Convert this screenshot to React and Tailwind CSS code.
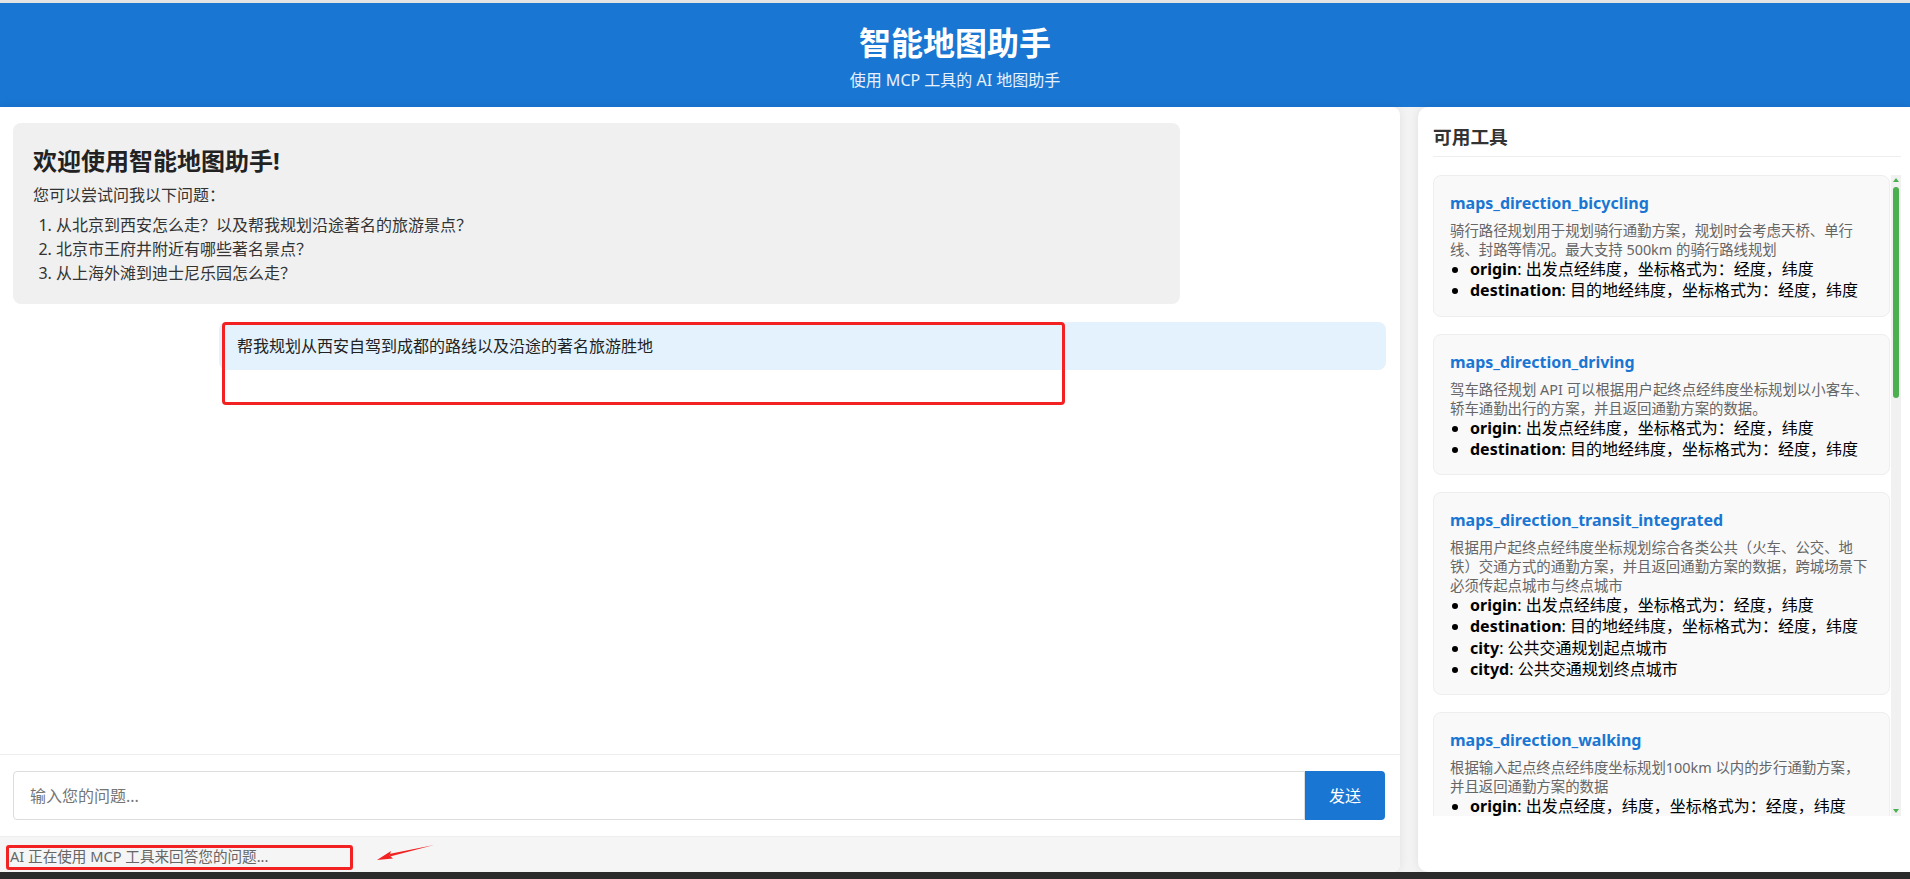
import React from 'react';

const tools = [
  {
    name: 'maps_direction_bicycling',
    desc: '骑行路径规划用于规划骑行通勤方案，规划时会考虑天桥、单行线、封路等情况。最大支持 500km 的骑行路线规划',
    params: [
      ['origin', '出发点经纬度，坐标格式为：经度，纬度'],
      ['destination', '目的地经纬度，坐标格式为：经度，纬度'],
    ],
  },
  {
    name: 'maps_direction_driving',
    desc: '驾车路径规划 API 可以根据用户起终点经纬度坐标规划以小客车、轿车通勤出行的方案，并且返回通勤方案的数据。',
    params: [
      ['origin', '出发点经纬度，坐标格式为：经度，纬度'],
      ['destination', '目的地经纬度，坐标格式为：经度，纬度'],
    ],
  },
  {
    name: 'maps_direction_transit_integrated',
    desc: '根据用户起终点经纬度坐标规划综合各类公共（火车、公交、地铁）交通方式的通勤方案，并且返回通勤方案的数据，跨城场景下必须传起点城市与终点城市',
    params: [
      ['origin', '出发点经纬度，坐标格式为：经度，纬度'],
      ['destination', '目的地经纬度，坐标格式为：经度，纬度'],
      ['city', '公共交通规划起点城市'],
      ['cityd', '公共交通规划终点城市'],
    ],
  },
  {
    name: 'maps_direction_walking',
    desc: '根据输入起点终点经纬度坐标规划100km 以内的步行通勤方案，并且返回通勤方案的数据',
    params: [
      ['origin', '出发点经度，纬度，坐标格式为：经度，纬度'],
      ['destination', '目的地经度，纬度，坐标格式为：经度，纬度'],
    ],
  },
];

function ToolCard({ tool }) {
  return (
    <div className="shrink-0 bg-[#f9f9f9] border border-[#eee] rounded-[8px] pl-[16px] pr-[18px] pt-[15px] pb-[14px]">
      <h4 className="text-[16px] leading-[24px] font-bold text-[#1976d2] mb-[6px]">{tool.name}</h4>
      <p className="text-[14.4px] leading-[19px] text-[#666]">{tool.desc}</p>
      <ul className="list-disc pl-[20px] text-[16px] leading-[21.3px] text-black">
        {tool.params.map(([k, v]) => (
          <li key={k}>
            <strong>{k}</strong>: {v}
          </li>
        ))}
      </ul>
    </div>
  );
}

export default function App() {
  return (
    <div className="w-[1910px] h-[879px] overflow-hidden flex flex-col bg-[#f3f3f3] font-['Noto_Sans','Noto_Sans_CJK_SC',sans-serif]">
      <div className="h-[3px] shrink-0 bg-[#e4e4e4]" />

      {/* Header */}
      <header className="h-[104px] shrink-0 bg-[#1976d2] text-center pt-[21px]">
        <h1 className="text-[32px] leading-[38px] font-bold text-white">智能地图助手</h1>
        <p className="mt-[7px] text-[16px] leading-[22px] text-white/90">使用 MCP 工具的 AI 地图助手</p>
      </header>

      <main className="h-[765px] shrink-0 flex gap-[18px]">
        {/* Chat */}
        <section className="flex-1 flex flex-col bg-white rounded-r-[8px] overflow-hidden shadow-[0_0_10px_rgba(0,0,0,0.08)]">
          <div className="flex-1 pt-[16px] pl-[13px] pr-[14px]">
            <div className="w-[85%] bg-[#f0f0f0] rounded-[8px] pl-[20px] pr-[20px] pt-[20px] pb-[19px] text-[#222]">
              <h2 className="text-[24px] leading-[36px] font-bold">欢迎使用智能地图助手!</h2>
              <p className="mt-[4px] text-[16px] leading-[24px] text-[#333]">您可以尝试问我以下问题：</p>
              <ol className="mt-[6px] list-decimal pl-[23px] text-[16px] leading-[24px] text-[#333]">
                <li>从北京到西安怎么走？以及帮我规划沿途著名的旅游景点？</li>
                <li>北京市王府井附近有哪些著名景点？</li>
                <li>从上海外滩到迪士尼乐园怎么走？</li>
              </ol>
            </div>

            <div className="mt-[18px] flex justify-end">
              <div className="relative w-[85%] bg-[#e3f2fd] rounded-[8px] pl-[18px] pr-[16px] py-[12px] text-[16px] leading-[24px] text-[#222]">
                帮我规划从西安自驾到成都的路线以及沿途的著名旅游胜地
                <div className="absolute left-[3px] top-0 w-[843px] h-[83px] border-[3px] border-[#f22222] rounded-[4px]" />
              </div>
            </div>
          </div>

          {/* Input */}
          <div className="shrink-0 border-t border-[#eee] pl-[13px] pr-[15px] py-[16px] flex">
            <input
              className="flex-1 h-[49px] border border-[#ddd] rounded-l-[4px] pl-[16px] text-[16px] outline-none placeholder:text-[#757575]"
              placeholder="输入您的问题..."
            />
            <button className="w-[80px] h-[49px] bg-[#1976d2] text-white text-[16px] rounded-r-[4px]">发送</button>
          </div>

          {/* Status */}
          <div className="relative h-[36px] shrink-0 bg-[#f5f5f5] border-t border-[#eee] pl-[10px] pt-[9px] text-[14.6px] leading-[21px] text-[#666]">
            AI 正在使用 MCP 工具来回答您的问题...
            <div className="absolute left-[6px] top-[8px] w-[347px] h-[25px] border-[3px] border-[#f22222] rounded-[3px]" />
            <svg className="absolute left-[374px] top-[6px]" width="62" height="22" viewBox="0 0 62 22">
              <path d="M60 2 L16 13.5 L15 11 Z" fill="#f22222" />
              <path d="M3 17 L17 8 L15.5 12.5 L19 15.5 Z" fill="#f22222" />
            </svg>
          </div>
        </section>

        {/* Tools */}
        <aside className="w-[492px] shrink-0 flex flex-col bg-white rounded-l-[10px] pl-[15px] pr-[9px] pt-[16px] shadow-[0_0_10px_rgba(0,0,0,0.08)]">
          <h3 className="text-[18.72px] leading-[27px] font-bold text-[#333] pb-[6px] border-b border-[#eee]">可用工具</h3>
          <div className="mt-[18px] h-[641px] flex gap-[1px]">
            <div className="flex-1 overflow-hidden flex flex-col gap-[17px]">
              {tools.map((t) => (
                <ToolCard key={t.name} tool={t} />
              ))}
            </div>
            <div className="w-[10px] bg-[#f1f1f1] flex flex-col items-center">
              <div className="mt-[3px] w-0 h-0 border-l-[3px] border-r-[3px] border-b-[4px] border-l-transparent border-r-transparent border-b-[#4caf50]" />
              <div className="mt-[5px] w-[6px] h-[211px] rounded-full bg-[#4caf50]" />
              <div className="flex-1" />
              <div className="mb-[3px] w-0 h-0 border-l-[3px] border-r-[3px] border-t-[4px] border-l-transparent border-r-transparent border-t-[#4caf50]" />
            </div>
          </div>
        </aside>
      </main>

      <div className="flex-1 bg-[#2b2b2b]" />
    </div>
  );
}
